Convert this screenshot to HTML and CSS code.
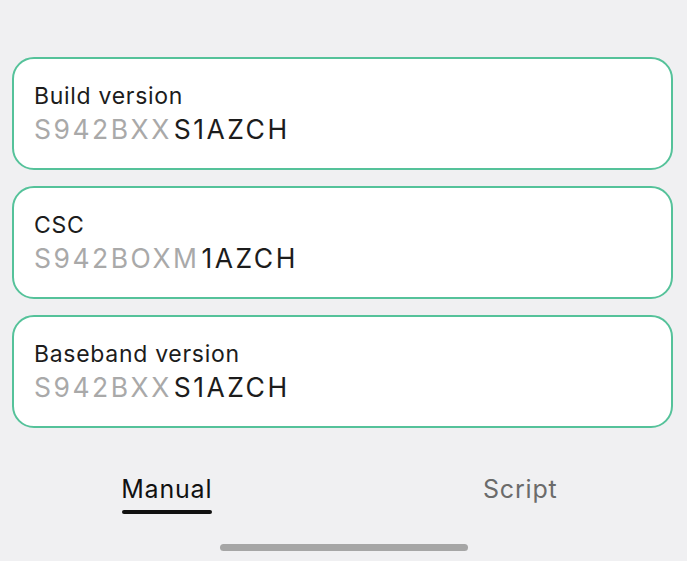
FILE: index.html
```html
<!DOCTYPE html>
<html>
<head>
<meta charset="utf-8">
<link rel="stylesheet" href="styles.css">
</head>
<body>
<div class="screen">
  <div class="cards">
    <div class="card">
      <div class="label">Build version</div>
      <div class="value"><span class="dim">S942BXX</span><span class="strong">S1AZCH</span></div>
    </div>
    <div class="card">
      <div class="label">CSC</div>
      <div class="value"><span class="dim">S942BOXM</span><span class="strong">1AZCH</span></div>
    </div>
    <div class="card">
      <div class="label">Baseband version</div>
      <div class="value"><span class="dim">S942BXX</span><span class="strong">S1AZCH</span></div>
    </div>
  </div>
  <div class="tabs">
    <div class="tab active">Manual</div>
    <div class="tab">Script</div>
  </div>
  <div class="homebar"></div>
</div>
</body>
</html>
```
FILE: styles.css
```css
html, body {
  margin: 0;
  padding: 0;
  background: #f0f0f2;
}
.screen {
  width: 687px;
  height: 561px;
  overflow: hidden;
  font-family: "Inter", "Noto Sans", sans-serif;
  color: #1a1a1a;
}
.cards {
  display: flex;
  flex-direction: column;
  gap: 16px;
  padding: 57px 14px 0 12px;
}
.card {
  box-sizing: border-box;
  height: 113px;
  border: 2px solid #55c29a;
  border-radius: 22px;
  background: #fff;
  padding: 22px 20px 0 20px;
}
.label {
  font-size: 23px;
  line-height: 30px;
  letter-spacing: 0.7px;
  color: #1c1c1c;
}
.value {
  font-size: 26.5px;
  line-height: 36px;
  letter-spacing: 2.5px;
}
.dim {
  color: #a9a9a9;
  margin-right: 2px;
}
.strong {
  color: #1c1c1c;
}
.tabs {
  display: flex;
  margin: 0 -10px;
  padding-top: 45px;
}
.tab {
  flex: 1;
  text-align: center;
  font-size: 25px;
  line-height: 32px;
  letter-spacing: 0.8px;
  color: #6b6b6b;
}
.tab.active {
  color: #111;
}
.tab.active::after {
  content: "";
  display: block;
  width: 90px;
  height: 4px;
  border-radius: 2px;
  background: #111;
  margin: 5px auto 0;
}
.homebar {
  width: 248px;
  height: 7px;
  border-radius: 4px;
  background: #a6a6a6;
  margin: 30px auto 0;
}
```
